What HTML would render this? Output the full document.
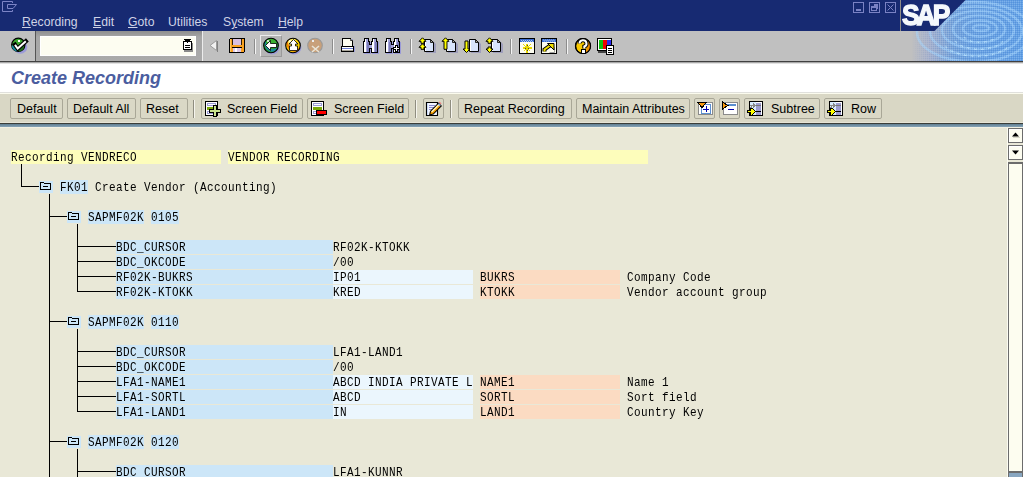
<!DOCTYPE html>
<html><head><meta charset="utf-8">
<style>
*{margin:0;padding:0;box-sizing:border-box}
html,body{width:1023px;height:477px;overflow:hidden;background:#e9e8d7;font-family:"Liberation Sans",sans-serif}
.a{position:absolute}
#title{left:0;top:0;width:1023px;height:31px;background:#172a72}
.menu{top:15px;font-size:12.2px;color:#cfd3e6;white-space:nowrap}
.menu u{text-decoration:underline}
#tb{left:0;top:31px;width:1023px;height:31px;background:#c0c0c0;border-bottom:1px solid #404040}
#tbl{left:0;top:62px;width:1023px;height:2px;background:linear-gradient(#a8a8a8 0,#a8a8a8 1px,#e2e2e2 1px)}
#hdr{left:0;top:64px;width:1023px;height:28px;background:#fff}
#hdr h1{position:absolute;left:11px;top:4px;font:italic bold 18px "Liberation Sans",sans-serif;color:#4b5d9f;white-space:nowrap}
#atb{left:0;top:92px;width:1023px;height:31px;background:#d9d7c5;border-top:1px solid #e0e0dc;box-shadow:inset 0 1px 0 #fbfbee}
#atbl{left:0;top:122px;width:1023px;height:6px;background:linear-gradient(#e6e4d6 0,#e6e4d6 1px,#3a3d38 1px,#3a3d38 2px,#5f7d90 2px,#86a4b8 5px,#f2f0e2 5px)}
.btn{position:absolute;top:98px;height:21px;border:1px solid #a9a797;border-radius:2px;background:#dad8c6;font-size:12.5px;color:#000;white-space:nowrap;line-height:21px}
.btn span{position:absolute;top:0}
.sep{position:absolute;width:2px;border-left:1px solid #8f8d80;border-right:1px solid #f6f5ee}
.mono{font-family:"Liberation Mono",monospace;font-size:11px;letter-spacing:0.4px;white-space:pre;color:#000;line-height:14px;transform:scaleY(1.22);transform-origin:0 0}
.hl{position:absolute;height:14px}
.y{background:#fdfdbb}
.b{background:#cce6f8}
.lb{background:#ebf6fd}
.o{background:#fbdbc2}
.t{position:absolute;top:0;left:1px}
.ln{position:absolute;background:#000}
</style></head><body>
<div id="title" class="a"></div>
<div id="menus">
<div class="a menu" style="left:22px"><u>R</u>ecording</div>
<div class="a menu" style="left:93px"><u>E</u>dit</div>
<div class="a menu" style="left:128px"><u>G</u>oto</div>
<div class="a menu" style="left:168px">Utilities</div>
<div class="a menu" style="left:223px">S<u>y</u>stem</div>
<div class="a menu" style="left:278px"><u>H</u>elp</div>
</div>
<div id="tb" class="a"></div>
<div id="tbl" class="a"></div>
<svg class="a" style="left:10px;top:37px" width="20" height="18" viewBox="0 0 20 18"><circle cx="10.5" cy="10" r="6.8" fill="#9b9bd8"/><circle cx="8.3" cy="7.8" r="6.6" fill="#3aa52e" stroke="#000" stroke-width="1.3"/><path d="M2.8 8.5a5.6 5.6 0 0 0 5 5" stroke="#1890a0" stroke-width="2.2" fill="none"/><path d="M9 13.5a5.6 5.6 0 0 0 4.5-4" stroke="#1f6a1a" stroke-width="2" fill="none"/><path d="M5 7.8L7.7 11.6L15.8 4.3" stroke="#000" stroke-width="4.2" fill="none" stroke-linecap="square"/><path d="M5 7.8L7.7 11.6L15.8 4.3" stroke="#fff" stroke-width="2" fill="none"/><rect x="8" y="3" width="2" height="2" fill="#fff"/></svg>
<div class="a" style="left:35px;top:31px;width:1px;height:30px;background:#555"></div>
<div class="a" style="left:36px;top:31px;width:166px;height:30px;background:linear-gradient(#8e8e8e,#a6a6a6 6px,#aaaaaa)"></div>
<div class="a" style="left:202px;top:31px;width:1px;height:30px;background:#ececec"></div>
<div class="a" style="left:40px;top:36px;width:156px;height:20px;background:#fdfdf1;border:1px solid #fff"></div>
<svg class="a" style="left:182px;top:39px" width="12" height="13" viewBox="0 0 12 13" shape-rendering="crispEdges"><rect x="2" y="4" width="9" height="9" fill="#8a8a8a"/><rect x="1.5" y="2.5" width="8" height="8" fill="#fff" stroke="#000"/><path d="M1 0h9l-4.5 4z" fill="#000"/><rect x="3" y="6" width="5" height="1" fill="#000"/><rect x="3" y="8" width="5" height="1" fill="#000"/></svg>
<svg class="a" style="left:208px;top:39px" width="12" height="14" viewBox="0 0 12 14"><path d="M8.5 1.5v10l-6.5-5z" fill="#f0f0f0" stroke="#9a9a9a" stroke-width="1"/><path d="M9.5 2v11" stroke="#808080"/></svg>
<svg class="a" style="left:229px;top:38px" width="17" height="16" viewBox="0 0 17 16" shape-rendering="crispEdges"><rect x="1" y="1" width="15" height="14" fill="#8888c8" opacity="0.6"/><rect x="0.5" y="0.5" width="15" height="14" rx="1.5" fill="#f8a020" stroke="#000"/><rect x="1" y="1" width="1" height="13" fill="#ffc860"/><rect x="4" y="1" width="8" height="6" fill="#d8c0e0"/><rect x="3" y="1" width="1" height="6" fill="#000" opacity="0.8"/><rect x="12" y="1" width="1" height="6" fill="#000" opacity="0.8"/><rect x="3" y="9" width="10" height="1" fill="#000"/><rect x="4" y="10" width="8" height="4" fill="#e0c8e8"/><rect x="6" y="10" width="2" height="4" fill="#fff"/></svg>
<div class="a" style="left:254px;top:39px;width:2px;height:15px;border-left:1px solid #8c8c8c;border-right:1px solid #f4f4f4"></div>
<div class="a" style="left:260px;top:35px;width:22px;height:22px;background:#b5b5b5;border-top:1px solid #ececec;border-left:1px solid #ececec;border-bottom:1px solid #9a9a9a;border-right:1px solid #9a9a9a"></div>
<svg class="a" style="left:262px;top:37px" width="18" height="18" viewBox="0 0 18 18"><clipPath id="cg"><circle cx="9" cy="8.5" r="7"/></clipPath><circle cx="10" cy="10" r="7.5" fill="#9b9bd8"/><circle cx="9" cy="8.5" r="7.3" fill="#2a9a30"/><g clip-path="url(#cg)"><circle cx="11" cy="6" r="7.5" fill="none" stroke="#1a8aa0" stroke-width="2.5"/><circle cx="9" cy="5" r="5" fill="#3ab030"/></g><circle cx="9" cy="8.5" r="7.3" fill="none" stroke="#000" stroke-width="1.1"/><path d="M3.5 8.5l5-5v3h6v4h-6v3z" fill="#fff" stroke="#000" stroke-width="0.8"/><circle cx="6" cy="4" r="1" fill="#fff"/></svg>
<svg class="a" style="left:284px;top:37px" width="18" height="18" viewBox="0 0 18 18"><clipPath id="cy"><circle cx="9" cy="8.5" r="7"/></clipPath><circle cx="10" cy="10" r="7.5" fill="#9b9bd8"/><circle cx="9" cy="8.5" r="7.3" fill="#f8d000"/><g clip-path="url(#cy)"><circle cx="11" cy="6" r="7.5" fill="none" stroke="#f08000" stroke-width="2.5"/><circle cx="8" cy="5" r="4" fill="#fff060"/></g><circle cx="9" cy="8.5" r="7.3" fill="none" stroke="#000" stroke-width="1.1"/><path d="M9.5 2.5l4.5 4.5h-2.5v2h2v4.5h-8v-4.5h2v-2h-2.5z" fill="#fff" stroke="#000" stroke-width="0.8"/><circle cx="6" cy="4" r="1" fill="#fff"/></svg>
<svg class="a" style="left:306px;top:37px" width="18" height="18" viewBox="0 0 18 18"><circle cx="9" cy="8.5" r="7.3" fill="#c8a07a" stroke="#9a9a9a" stroke-width="1.1"/><path d="M6 9l7 6M13 9l-7 6" stroke="#e8e4d8" stroke-width="1.6"/><rect x="6" y="3" width="2" height="2" fill="#eee"/></svg>
<div class="a" style="left:332px;top:39px;width:2px;height:15px;border-left:1px solid #8c8c8c;border-right:1px solid #f4f4f4"></div>
<svg class="a" style="left:340px;top:37px" width="17" height="17" viewBox="0 0 17 17" shape-rendering="crispEdges"><path d="M3 2h10v7h2v6h-12z" fill="#9b9bd8"/><path d="M2.5 1.5h8l2 2v6h-10z" fill="#fdfdf0" stroke="#000"/><path d="M10.5 1.5v2h2" fill="#888" stroke="#000" stroke-width="0.6"/><rect x="1.5" y="9.5" width="12" height="5" fill="#fff" stroke="#000"/><rect x="2" y="11" width="11" height="1" fill="#7080d0"/><rect x="2" y="13" width="11" height="1" fill="#a8a498"/></svg>
<svg class="a" style="left:362px;top:37px" width="17" height="17" viewBox="0 0 17 17" shape-rendering="crispEdges"><g fill="#9b9bd8"><rect x="2" y="5" width="7" height="12"/><rect x="10" y="5" width="7" height="12"/></g><g fill="#000"><rect x="2" y="1" width="5" height="4"/><rect x="1" y="4" width="7" height="12"/><rect x="10" y="1" width="5" height="4"/><rect x="9" y="4" width="7" height="12"/><rect x="7" y="7" width="3" height="5"/></g><g fill="#a4a4dc"><rect x="3" y="2" width="3" height="3"/><rect x="2" y="5" width="5" height="10"/><rect x="11" y="2" width="3" height="3"/><rect x="10" y="5" width="5" height="10"/><rect x="7" y="8" width="3" height="3"/></g><g fill="#fff"><rect x="3" y="2" width="1" height="3"/><rect x="2" y="5" width="2" height="10"/><rect x="11" y="2" width="1" height="3"/><rect x="10" y="5" width="2" height="10"/></g><rect x="5" y="5" width="2" height="10" fill="#7c7cb8"/><rect x="13" y="5" width="2" height="10" fill="#7c7cb8"/></svg>
<svg class="a" style="left:384px;top:37px" width="19" height="17" viewBox="0 0 19 17" shape-rendering="crispEdges"><g fill="#9b9bd8"><rect x="2" y="5" width="7" height="12"/><rect x="10" y="5" width="7" height="12"/></g><g fill="#000"><rect x="2" y="1" width="5" height="4"/><rect x="1" y="4" width="7" height="12"/><rect x="10" y="1" width="5" height="4"/><rect x="9" y="4" width="7" height="12"/><rect x="7" y="7" width="3" height="5"/></g><g fill="#a4a4dc"><rect x="3" y="2" width="3" height="3"/><rect x="2" y="5" width="5" height="10"/><rect x="11" y="2" width="3" height="3"/><rect x="10" y="5" width="5" height="10"/><rect x="7" y="8" width="3" height="3"/></g><g fill="#fff"><rect x="3" y="2" width="1" height="3"/><rect x="2" y="5" width="2" height="10"/><rect x="11" y="2" width="1" height="3"/><rect x="10" y="5" width="2" height="10"/></g><rect x="5" y="5" width="2" height="10" fill="#7c7cb8"/><rect x="13" y="5" width="2" height="10" fill="#7c7cb8"/><path d="M11 8h3v2h2v3h-2v2h-3v-2h-2v-3h2z" fill="#000"/><path d="M12 9h1v2h2v1h-2v2h-1v-2h-2v-1h2z" fill="#fff"/></svg>
<div class="a" style="left:410px;top:39px;width:2px;height:15px;border-left:1px solid #8c8c8c;border-right:1px solid #f4f4f4"></div>
<svg class="a" style="left:418px;top:37px" width="18" height="17" viewBox="0 0 18 17"><path d="M8 4h7l3 3v9h-10z" fill="#7c7cb8" opacity="0.5"/><path d="M6.5 2.5h6l3 3v9h-9z" fill="#d8e4fc" stroke="#000"/><path d="M12.5 2.5v3h3z" fill="#a8a498" stroke="#000" stroke-width="0.8"/><rect x="7" y="3" width="1" height="11" fill="#fff"/><path d="M4.5 0.8l3.5 3.5h-2v2h-3v-2h-2z" fill="#ff0" stroke="#000" stroke-width="1"/><path d="M4.5 6.8l3.5 3.5h-2v2h-3v-2h-2z" fill="#ff0" stroke="#000" stroke-width="1"/></svg>
<svg class="a" style="left:440px;top:37px" width="18" height="17" viewBox="0 0 18 17"><path d="M8 4h7l3 3v9h-10z" fill="#7c7cb8" opacity="0.5"/><path d="M6.5 2.5h6l3 3v9h-9z" fill="#d8e4fc" stroke="#000"/><path d="M12.5 2.5v3h3z" fill="#a8a498" stroke="#000" stroke-width="0.8"/><rect x="7" y="3" width="1" height="11" fill="#fff"/><path d="M5.5 0.8l3.5 3.5h-2v8h-3v-8h-2z" fill="#ff0" stroke="#000" stroke-width="1"/></svg>
<svg class="a" style="left:463px;top:37px" width="18" height="17" viewBox="0 0 18 17"><path d="M8 4h7l3 3v9h-10z" fill="#7c7cb8" opacity="0.5"/><path d="M6.5 2.5h6l3 3v9h-9z" fill="#d8e4fc" stroke="#000"/><path d="M12.5 2.5v3h3z" fill="#a8a498" stroke="#000" stroke-width="0.8"/><rect x="7" y="3" width="1" height="11" fill="#fff"/><path d="M3.5 15.5l3.5 -3.5h-2v-8h-3v8h-2z" fill="#ff0" stroke="#000" stroke-width="1"/></svg>
<svg class="a" style="left:485px;top:37px" width="18" height="17" viewBox="0 0 18 17"><path d="M8 4h7l3 3v9h-10z" fill="#7c7cb8" opacity="0.5"/><path d="M6.5 2.5h6l3 3v9h-9z" fill="#d8e4fc" stroke="#000"/><path d="M12.5 2.5v3h3z" fill="#a8a498" stroke="#000" stroke-width="0.8"/><rect x="7" y="3" width="1" height="11" fill="#fff"/><path d="M4.5 0.8l3.5 3.5h-2v2h-3v-2h-2z" fill="#ff0" stroke="#000" stroke-width="1"/><path d="M4.5 15.5l3.5 -3.5h-2v-2h-3v2h-2z" fill="#ff0" stroke="#000" stroke-width="1"/></svg>
<div class="a" style="left:510px;top:39px;width:2px;height:15px;border-left:1px solid #8c8c8c;border-right:1px solid #f4f4f4"></div>
<svg class="a" style="left:519px;top:38px" width="17" height="17" viewBox="0 0 17 17" shape-rendering="crispEdges"><rect x="0.5" y="0.5" width="15" height="15" fill="#fdfdf0" stroke="#000"/><rect x="1" y="1" width="14" height="3" fill="#3a6ad0"/><path d="M2 2h1M4 2h1M6 2h1M8 2h1M10 2h1M12 2h1M3 3h1M5 3h1M7 3h1M9 3h1M11 3h1M13 3h1" stroke="#a8c8f0"/><path d="M8 5.5v9M3.5 10h9M4.5 6.5l7 7M11.5 6.5l-7 7" stroke="#e8d800" stroke-width="1.3"/><path d="M8 7v1M6 10h1M9 10h1M8 12v1" stroke="#444" stroke-width="1"/></svg>
<svg class="a" style="left:541px;top:38px" width="17" height="17" viewBox="0 0 17 17"><rect x="0.5" y="0.5" width="15" height="15" fill="#fdfdf0" stroke="#000"/><rect x="1" y="1" width="14" height="3" fill="#3a6ad0"/><path d="M2 2h1M4 2h1M6 2h1M8 2h1M10 2h1M12 2h1M3 3h1M5 3h1M7 3h1M9 3h1M11 3h1M13 3h1" stroke="#a8c8f0"/><path d="M9.5 9.5h4v5h-5" fill="none" stroke="#a0a0a0" stroke-width="1"/><path d="M3.5 13.5v-2l5.5-4" stroke="#000" stroke-width="4" fill="none"/><path d="M3.5 13.5v-2l5.5-4" stroke="#f0e000" stroke-width="2" fill="none"/><path d="M6.5 5.5h6.5v6.5z" fill="#f0e000" stroke="#000" stroke-width="1"/></svg>
<div class="a" style="left:566px;top:39px;width:2px;height:15px;border-left:1px solid #8c8c8c;border-right:1px solid #f4f4f4"></div>
<svg class="a" style="left:574px;top:37px" width="19" height="18" viewBox="0 0 19 18"><circle cx="9" cy="9" r="7.5" fill="#f8c800" stroke="#000" stroke-width="1.2"/><path d="M9 1.5a7.5 7.5 0 0 1 0 15a4 7.5 0 0 0 0-15z" fill="#f09000"/><circle cx="9" cy="9" r="7.5" fill="none" stroke="#000" stroke-width="1.2"/><path d="M5.5 6.5a3.5 3.2 0 1 1 4.8 3v2" stroke="#000" stroke-width="4" fill="none"/><path d="M5.5 6.5a3.5 3.2 0 1 1 4.8 3v2" stroke="#fff" stroke-width="2" fill="none"/><rect x="7.5" y="12.5" width="4" height="4" fill="#fff" stroke="#000" stroke-width="1"/></svg>
<svg class="a" style="left:597px;top:38px" width="17" height="17" viewBox="0 0 17 17" shape-rendering="crispEdges"><rect x="0.5" y="0.5" width="14" height="12" fill="#fff" stroke="#000"/><rect x="2" y="2" width="4" height="9" fill="#10c010"/><rect x="6" y="2" width="4" height="9" fill="#f00000"/><rect x="10" y="2" width="4" height="9" fill="#2828f0"/><rect x="1" y="13" width="13" height="2" fill="#444"/><rect x="9.5" y="7.5" width="7" height="9" fill="#fff" stroke="#000"/><path d="M11 10h4M11 12h4M11 14h4" stroke="#000"/></svg>
<div id="hdr" class="a"><h1>Create Recording</h1></div>
<div id="atb" class="a"></div>
<div id="atbl" class="a"></div>
<div class="btn" style="left:10px;width:53px"><span style="left:6px">Default</span></div>
<div class="btn" style="left:67px;width:69px"><span style="left:5px">Default All</span></div>
<div class="btn" style="left:140px;width:48px"><span style="left:5px">Reset</span></div>
<div class="sep" style="left:193px;top:100px;height:18px"></div>
<div class="btn" style="left:201px;width:102px"><svg class="a" style="left:3px;top:2px" width="18" height="16" viewBox="0 0 18 16" shape-rendering="crispEdges">
<rect x="0.5" y="0.5" width="12" height="14" fill="#fff" stroke="#000"/>
<rect x="2" y="2" width="9" height="3" fill="#9c9cd6"/><rect x="3" y="3" width="7" height="1" fill="#fff"/>
<rect x="2" y="6" width="9" height="3" fill="#7aa80a"/><rect x="2" y="10" width="9" height="3" fill="#9c9cd6"/><rect x="3" y="11" width="5" height="1" fill="#fff"/>
<path d="M8 4h4v4h4v4h-4v4h-4v-4h-4v-4h4z" fill="#000"/>
<path d="M9 5h2v4h4v2h-4v4h-2v-4h-4v-2h4z" fill="#c9e38f"/>
</svg><span style="left:25px">Screen Field</span></div>
<div class="btn" style="left:307px;width:102px"><svg class="a" style="left:3px;top:2px" width="18" height="16" viewBox="0 0 18 16" shape-rendering="crispEdges">
<rect x="0.5" y="0.5" width="12" height="14" fill="#fff" stroke="#000"/>
<rect x="2" y="2" width="9" height="3" fill="#9c9cd6"/><rect x="3" y="3" width="7" height="1" fill="#fff"/>
<rect x="2" y="6" width="9" height="3" fill="#7aa80a"/><rect x="2" y="10" width="9" height="3" fill="#9c9cd6"/><rect x="3" y="11" width="5" height="1" fill="#fff"/>
<rect x="5" y="9" width="11" height="5" fill="#000"/><rect x="6" y="10" width="9" height="3" fill="#f00"/>
</svg><span style="left:26px">Screen Field</span></div>
<div class="sep" style="left:415px;top:100px;height:18px"></div>
<div class="btn" style="left:423px;width:21px"><svg class="a" style="left:1px;top:2px" width="18" height="16" viewBox="0 0 18 16">
<path d="M1.5 1.5h11v13h-11z" fill="#f0f4ff" stroke="#000" stroke-width="1.1"/>
<rect x="2" y="2" width="1" height="12" fill="#c8d8f8"/>
<path d="M4 4.5h6M4 6.5h6M4 8.5h4" stroke="#8a8ad0" stroke-width="1"/>
<path d="M4 14.5l1-4.5 8.5-8.5 3.5 3.5-8.5 8.5z" fill="#000"/>
<path d="M5.3 13.2l0.8-2.8 7.4-7.4 2 2-7.4 7.4z" fill="#f8a000"/>
<path d="M6.1 10.4l7.4-7.4 1 1-7.4 7.4z" fill="#fff6c0"/>
<path d="M12.8 3.2l1-1 2 2-1 1z" fill="#88aae0"/>
<path d="M13.8 1.2l0.7-0.7 2 2-0.7 0.7z" fill="#f07878"/>
</svg></div>
<div class="sep" style="left:450px;top:100px;height:18px"></div>
<div class="btn" style="left:458px;width:114px"><span style="left:5px">Repeat Recording</span></div>
<div class="btn" style="left:576px;width:114px"><span style="left:5px">Maintain Attributes</span></div>
<div class="btn" style="left:694px;width:21px"><svg class="a" style="left:2px;top:2px" width="17" height="16" viewBox="0 0 17 16" shape-rendering="crispEdges">
<rect x="1.5" y="1.5" width="14" height="12" fill="#fff" stroke="#8a8a8a"/>
<rect x="4.5" y="3.5" width="9" height="9" fill="#fff" stroke="#5b8fd0"/>
<path d="M6 8.5h6M9.5 5v6" stroke="#0000b0" stroke-width="1"/>
<path d="M0 1h10l-5 6.5z" fill="#000"/><path d="M2 2h6l-3 3.8z" fill="#f89a10"/>
</svg></div>
<div class="btn" style="left:719px;width:21px"><svg class="a" style="left:2px;top:2px" width="17" height="16" viewBox="0 0 17 16" shape-rendering="crispEdges">
<rect x="1.5" y="1.5" width="14" height="12" fill="#fff" stroke="#8a8a8a"/>
<rect x="5" y="3" width="9" height="2" fill="#5b8fd0"/>
<rect x="6" y="8" width="6" height="1" fill="#0000b0"/>
<path d="M0 0l7 4.5-7 4.5z" fill="#000"/><path d="M1 2l4 2.5-4 2.5z" fill="#f89a10"/>
</svg></div>
<div class="btn" style="left:744px;width:76px"><svg class="a" style="left:2px;top:2px" width="16" height="16" viewBox="0 0 16 16" shape-rendering="crispEdges">
<rect x="2.5" y="0.5" width="13" height="14" fill="#fff" stroke="#000"/>
<rect x="3" y="1" width="6" height="13" fill="#d8ecff"/>
<rect x="9" y="2" width="5" height="12" fill="#9c9cd0"/>
<rect x="9" y="4" width="5" height="1" fill="#777"/><rect x="9" y="10" width="5" height="1" fill="#000"/>
<path d="M3 4.5h4M6 2.5l2 2-2 2M3 7.5l2-2" stroke="#888" fill="none"/>
<path d="M0.5 9.5h3v-2.5h1.5l3.5 3.5-3.5 3.5h-1.5v-2.5h-3z" fill="#ff0" stroke="#000"/>
</svg><span style="left:26px">Subtree</span></div>
<div class="btn" style="left:824px;width:58px"><svg class="a" style="left:2px;top:2px" width="16" height="16" viewBox="0 0 16 16" shape-rendering="crispEdges">
<rect x="2.5" y="0.5" width="13" height="14" fill="#fff" stroke="#000"/>
<rect x="3" y="1" width="6" height="13" fill="#d8ecff"/>
<rect x="9" y="2" width="5" height="12" fill="#9c9cd0"/>
<rect x="9" y="4" width="5" height="1" fill="#777"/><rect x="9" y="10" width="5" height="1" fill="#000"/>
<path d="M3 4.5h4M6 2.5l2 2-2 2M3 7.5l2-2" stroke="#888" fill="none"/>
<path d="M0.5 9.5h3v-2.5h1.5l3.5 3.5-3.5 3.5h-1.5v-2.5h-3z" fill="#ff0" stroke="#000"/>
</svg><span style="left:26px">Row</span></div>

<div class="hl y" style="left:11px;top:150px;width:210px"></div>
<div class="mono a" style="left:11px;top:149px">Recording VENDRECO</div>
<div class="hl y" style="left:228px;top:150px;width:420px"></div>
<div class="mono a" style="left:228px;top:149px">VENDOR RECORDING</div>
<div class="hl b" style="left:39px;top:181px;width:14px;height:12px"></div>
<svg class="a" style="left:39px;top:181px" width="14" height="12" viewBox="0 0 14 12" shape-rendering="crispEdges" fill="#000"><rect x="1" y="1" width="4" height="1"/><rect x="1" y="1" width="1" height="8"/><rect x="5" y="2" width="7" height="1"/><rect x="11" y="2" width="1" height="7"/><rect x="1" y="8" width="11" height="1"/><rect x="4" y="5" width="5" height="1"/></svg>
<div class="hl b" style="left:60px;top:180px;width:28px"></div>
<div class="mono a" style="left:60px;top:179px">FK01 Create Vendor (Accounting)</div>
<div class="ln" style="left:21px;top:164px;width:1px;height:23px"></div>
<div class="ln" style="left:21px;top:186px;width:18px;height:1px"></div>
<div class="ln" style="left:49px;top:194px;width:1px;height:283px"></div>
<div class="ln" style="left:49px;top:216px;width:18px;height:1px"></div>
<div class="hl b" style="left:67px;top:211px;width:14px;height:12px"></div>
<svg class="a" style="left:67px;top:211px" width="14" height="12" viewBox="0 0 14 12" shape-rendering="crispEdges" fill="#000"><rect x="1" y="1" width="4" height="1"/><rect x="1" y="1" width="1" height="8"/><rect x="5" y="2" width="7" height="1"/><rect x="11" y="2" width="1" height="7"/><rect x="1" y="8" width="11" height="1"/><rect x="4" y="5" width="5" height="1"/></svg>
<div class="hl b" style="left:88px;top:210px;width:56px"></div>
<div class="hl b" style="left:151px;top:210px;width:28px"></div>
<div class="mono a" style="left:88px;top:209px">SAPMF02K 0105</div>
<div class="ln" style="left:77px;top:224px;width:1px;height:68px"></div>
<div class="ln" style="left:77px;top:246px;width:39px;height:1px"></div>
<div class="hl b" style="left:116px;top:240px;width:217px"></div>
<div class="mono a" style="left:116px;top:239px">BDC_CURSOR</div>
<div class="mono a" style="left:333px;top:239px">RF02K-KTOKK</div>
<div class="ln" style="left:77px;top:261px;width:39px;height:1px"></div>
<div class="hl b" style="left:116px;top:255px;width:217px"></div>
<div class="mono a" style="left:116px;top:254px">BDC_OKCODE</div>
<div class="mono a" style="left:333px;top:254px">/00</div>
<div class="ln" style="left:77px;top:276px;width:39px;height:1px"></div>
<div class="hl b" style="left:116px;top:270px;width:217px"></div>
<div class="mono a" style="left:116px;top:269px">RF02K-BUKRS</div>
<div class="hl lb" style="left:333px;top:270px;width:140px"></div>
<div class="hl o" style="left:480px;top:270px;width:140px"></div>
<div class="mono a" style="left:480px;top:269px">BUKRS</div>
<div class="mono a" style="left:627px;top:269px">Company Code</div>
<div class="mono a" style="left:333px;top:269px">IP01</div>
<div class="ln" style="left:77px;top:291px;width:39px;height:1px"></div>
<div class="hl b" style="left:116px;top:285px;width:217px"></div>
<div class="mono a" style="left:116px;top:284px">RF02K-KTOKK</div>
<div class="hl lb" style="left:333px;top:285px;width:140px"></div>
<div class="hl o" style="left:480px;top:285px;width:140px"></div>
<div class="mono a" style="left:480px;top:284px">KTOKK</div>
<div class="mono a" style="left:627px;top:284px">Vendor account group</div>
<div class="mono a" style="left:333px;top:284px">KRED</div>
<div class="ln" style="left:49px;top:321px;width:18px;height:1px"></div>
<div class="hl b" style="left:67px;top:316px;width:14px;height:12px"></div>
<svg class="a" style="left:67px;top:316px" width="14" height="12" viewBox="0 0 14 12" shape-rendering="crispEdges" fill="#000"><rect x="1" y="1" width="4" height="1"/><rect x="1" y="1" width="1" height="8"/><rect x="5" y="2" width="7" height="1"/><rect x="11" y="2" width="1" height="7"/><rect x="1" y="8" width="11" height="1"/><rect x="4" y="5" width="5" height="1"/></svg>
<div class="hl b" style="left:88px;top:315px;width:56px"></div>
<div class="hl b" style="left:151px;top:315px;width:28px"></div>
<div class="mono a" style="left:88px;top:314px">SAPMF02K 0110</div>
<div class="ln" style="left:77px;top:329px;width:1px;height:83px"></div>
<div class="ln" style="left:77px;top:351px;width:39px;height:1px"></div>
<div class="hl b" style="left:116px;top:345px;width:217px"></div>
<div class="mono a" style="left:116px;top:344px">BDC_CURSOR</div>
<div class="mono a" style="left:333px;top:344px">LFA1-LAND1</div>
<div class="ln" style="left:77px;top:366px;width:39px;height:1px"></div>
<div class="hl b" style="left:116px;top:360px;width:217px"></div>
<div class="mono a" style="left:116px;top:359px">BDC_OKCODE</div>
<div class="mono a" style="left:333px;top:359px">/00</div>
<div class="ln" style="left:77px;top:381px;width:39px;height:1px"></div>
<div class="hl b" style="left:116px;top:375px;width:217px"></div>
<div class="mono a" style="left:116px;top:374px">LFA1-NAME1</div>
<div class="hl lb" style="left:333px;top:375px;width:140px"></div>
<div class="hl o" style="left:480px;top:375px;width:140px"></div>
<div class="mono a" style="left:480px;top:374px">NAME1</div>
<div class="mono a" style="left:627px;top:374px">Name 1</div>
<div class="mono a" style="left:333px;top:374px">ABCD INDIA PRIVATE L</div>
<div class="ln" style="left:77px;top:396px;width:39px;height:1px"></div>
<div class="hl b" style="left:116px;top:390px;width:217px"></div>
<div class="mono a" style="left:116px;top:389px">LFA1-SORTL</div>
<div class="hl lb" style="left:333px;top:390px;width:140px"></div>
<div class="hl o" style="left:480px;top:390px;width:140px"></div>
<div class="mono a" style="left:480px;top:389px">SORTL</div>
<div class="mono a" style="left:627px;top:389px">Sort field</div>
<div class="mono a" style="left:333px;top:389px">ABCD</div>
<div class="ln" style="left:77px;top:411px;width:39px;height:1px"></div>
<div class="hl b" style="left:116px;top:405px;width:217px"></div>
<div class="mono a" style="left:116px;top:404px">LFA1-LAND1</div>
<div class="hl lb" style="left:333px;top:405px;width:140px"></div>
<div class="hl o" style="left:480px;top:405px;width:140px"></div>
<div class="mono a" style="left:480px;top:404px">LAND1</div>
<div class="mono a" style="left:627px;top:404px">Country Key</div>
<div class="mono a" style="left:333px;top:404px">IN</div>
<div class="ln" style="left:49px;top:441px;width:18px;height:1px"></div>
<div class="hl b" style="left:67px;top:436px;width:14px;height:12px"></div>
<svg class="a" style="left:67px;top:436px" width="14" height="12" viewBox="0 0 14 12" shape-rendering="crispEdges" fill="#000"><rect x="1" y="1" width="4" height="1"/><rect x="1" y="1" width="1" height="8"/><rect x="5" y="2" width="7" height="1"/><rect x="11" y="2" width="1" height="7"/><rect x="1" y="8" width="11" height="1"/><rect x="4" y="5" width="5" height="1"/></svg>
<div class="hl b" style="left:88px;top:435px;width:56px"></div>
<div class="hl b" style="left:151px;top:435px;width:28px"></div>
<div class="mono a" style="left:88px;top:434px">SAPMF02K 0120</div>
<div class="ln" style="left:77px;top:449px;width:1px;height:28px"></div>
<div class="ln" style="left:77px;top:471px;width:39px;height:1px"></div>
<div class="hl b" style="left:116px;top:465px;width:217px"></div>
<div class="mono a" style="left:116px;top:464px">BDC_CURSOR</div>
<div class="mono a" style="left:333px;top:464px">LFA1-KUNNR</div>
<svg class="a" style="left:0;top:0" width="20" height="14" viewBox="0 0 20 14"><path d="M12.5 3V1.5H2.5V11.5H12.5V10" fill="none" stroke="#7c84c6" stroke-width="1"/><path d="M7.5 4.5H16.5L13 8.5H7.5Z" fill="none" stroke="#7c84c6" stroke-width="1"/></svg>
<svg class="a" style="left:852px;top:1px" width="46" height="14" viewBox="0 0 46 14" shape-rendering="crispEdges">
<rect x="1.5" y="1.5" width="10" height="10" fill="none" stroke="#7a82c4"/><rect x="4" y="8" width="5" height="2" fill="#7a82c4"/>
<rect x="17.5" y="1.5" width="10" height="10" fill="none" stroke="#7a82c4"/><path d="M22 3h4v5h-2v-3h-2z" fill="#7a82c4"/><rect x="19.5" y="5.5" width="5" height="4" fill="none" stroke="#7a82c4"/><rect x="20" y="6" width="4" height="1" fill="#7a82c4"/>
<rect x="33.5" y="1.5" width="10" height="10" fill="none" stroke="#7a82c4"/></svg>
<svg class="a" style="left:885px;top:2px" width="11" height="11" viewBox="0 0 11 11"><path d="M2.5 2.5l6 6M8.5 2.5l-6 6" stroke="#7a82c4" stroke-width="1"/></svg>
<svg class="a" style="left:899px;top:0" width="124" height="61" viewBox="0 0 124 61">
<defs>
<linearGradient id="rg" x1="0" x2="1" y1="0" y2="0">
<stop offset="0.1" stop-color="#c0c0c0"/><stop offset="0.25" stop-color="#aab2cc"/><stop offset="0.45" stop-color="#78a4da"/><stop offset="0.6" stop-color="#6aa0e0"/><stop offset="1" stop-color="#64a0e4"/></linearGradient>
<pattern id="dp" width="2" height="2" patternUnits="userSpaceOnUse"><rect x="0" y="0" width="1" height="1" fill="#3a7ad0" fill-opacity="0.35"/><rect x="1" y="1" width="1" height="1" fill="#b0dcff" fill-opacity="0.3"/></pattern>
</defs>
<rect x="0" y="0" width="124" height="61" fill="url(#rg)"/>
<g fill="none" stroke="#a8d6fc" stroke-opacity="0.55" stroke-width="2.5">
<ellipse cx="82" cy="28" rx="8" ry="3"/>
<ellipse cx="81" cy="28.5" rx="17" ry="8"/>
<ellipse cx="80" cy="29" rx="26" ry="13.5"/>
<ellipse cx="79" cy="30" rx="36" ry="19"/>
<ellipse cx="77" cy="31" rx="46" ry="24.5"/>
<ellipse cx="75" cy="32" rx="57" ry="30"/>
</g>
<g fill="none" stroke="#c8ecff" stroke-opacity="0.6" stroke-width="1.5" stroke-dasharray="3 4">
<path d="M65 37a17 8 0 0 0 32 0"/><path d="M56 41a26 13.5 0 0 0 48 0"/><path d="M46 46a36 19 0 0 0 64 0"/>
</g>
<mask id="mk"><rect x="0" y="0" width="124" height="61" fill="url(#mg)"/></mask><linearGradient id="mg" x1="0" x2="1"><stop offset="0.1" stop-color="#000"/><stop offset="0.4" stop-color="#fff"/></linearGradient><rect x="0" y="0" width="124" height="61" fill="url(#dp)" mask="url(#mk)"/>
<polygon points="1,0 66.5,0 35.5,31 1,31" fill="#172a72"/>
<rect x="1" y="0" width="1" height="31" fill="#8e8c88"/>
<rect x="0" y="0" width="1" height="31" fill="#172a72"/>
</svg>
<div class="a" style="left:902px;top:-2px;font:bold 30px 'Liberation Sans',sans-serif;line-height:34px;color:#f4f8fc;-webkit-text-stroke:1.4px #f4f8fc;letter-spacing:-3.4px;transform:scaleX(0.88);transform-origin:0 0">SAP</div>
<div class="a" style="left:1007px;top:128px;width:1px;height:349px;background:#fbfbf2"></div>
<div class="a" style="left:1008px;top:128px;width:15px;height:15px;background:#fdfdf0;border:1px solid #6c6c6c;box-shadow:inset 1px 1px 0 #fff"></div>
<svg class="a" style="left:1011px;top:132px" width="9" height="6" viewBox="0 0 9 6"><path d="M4.5 0.5L8 4.5H1z" fill="#000"/><path d="M2 5.5h7" stroke="#d8d8c8"/></svg>
<div class="a" style="left:1008px;top:145px;width:15px;height:15px;background:#fdfdf0;border:1px solid #6c6c6c;box-shadow:inset 1px 1px 0 #fff"></div>
<svg class="a" style="left:1011px;top:150px" width="9" height="6" viewBox="0 0 9 6"><path d="M1 0.5H8L4.5 4.5z" fill="#000"/></svg>
<div class="a" style="left:1008px;top:162px;width:15px;height:311px;background:#fdfdf0;border:1px solid #6c6c6c;border-top:2px solid #6c6c6c;border-bottom:2px solid #6c6c6c"></div>
<div class="a" style="left:1008px;top:473px;width:15px;height:4px;background:#88a6c0;border-left:1px solid #6c6c6c;border-right:1px solid #6c6c6c"></div>

</body></html>
